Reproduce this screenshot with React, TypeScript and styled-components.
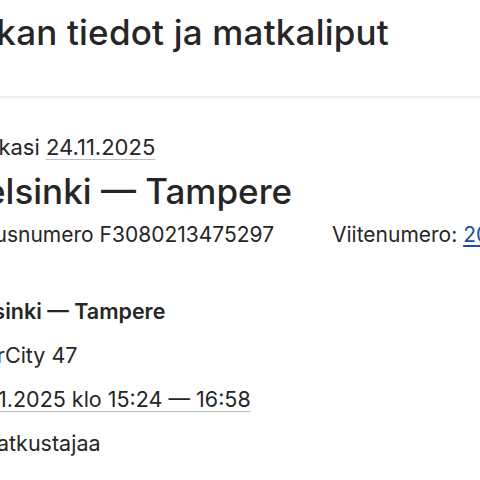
import styled, { createGlobalStyle } from 'styled-components'

const GlobalStyle = createGlobalStyle`
  html, body {
    margin: 0;
    padding: 0;
    background: #ffffff;
    overflow: hidden;
  }
  body {
    font-family: Inter, "Noto Sans", "Liberation Sans", sans-serif;
    color: #262626;
  }
`

const Viewport = styled.div`
  width: 480px;
  height: 480px;
  overflow: hidden;
`

const Page = styled.main`
  margin-left: -68px;
  width: 640px;
`

const Header = styled.header`
  padding: 11px 0 43px;
  border-bottom: 2px solid #eeeeee;
`

const Title = styled.h1`
  margin: 0;
  font-size: 35px;
  line-height: 42px;
  font-weight: 500;
  letter-spacing: 0.2px;
`

const Content = styled.div`
  padding: 35px 0 0 27px;
  display: flex;
  flex-direction: column;
`

const Summary = styled.section`
  display: flex;
  flex-direction: column;
`

const Lead = styled.p`
  margin: 0;
  font-size: 22px;
  line-height: 28px;
`

const Underlined = styled.span`
  text-decoration: underline;
  text-decoration-color: #bdbdbd;
  text-decoration-thickness: 1px;
  text-underline-offset: 4px;
`

const Route = styled.h2`
  margin: 10px 0 0;
  font-size: 35px;
  line-height: 40px;
  font-weight: 500;
`

const RefRow = styled.div`
  margin-top: 10px;
  display: flex;
  gap: 58px;
  font-size: 21px;
  line-height: 28px;
  white-space: nowrap;
`

const RefLink = styled.a`
  color: #1c4f9f;
  text-decoration: underline;
  text-underline-offset: 3px;
`

const Journey = styled.section`
  margin-top: 48px;
  display: flex;
  flex-direction: column;
  gap: 16px;
`

const Line = styled.p<{ $strong?: boolean }>`
  margin: 0;
  font-size: 21.5px;
  line-height: 28px;
  font-weight: ${(p) => (p.$strong ? 600 : 400)};
  white-space: nowrap;
`

export default function App() {
  return (
    <Viewport>
      <GlobalStyle />
      <Page>
        <Header>
          <Title>Matkan tiedot ja matkaliput</Title>
        </Header>
        <Content>
          <Summary>
            <Lead>
              Matkasi <Underlined>24.11.2025</Underlined>
            </Lead>
            <Route>Helsinki — Tampere</Route>
            <RefRow>
              <span>Tilausnumero F3080213475297</span>
              <span>
                Viitenumero: <RefLink href="#">2030802134752970</RefLink>
              </span>
            </RefRow>
          </Summary>
          <Journey>
            <Line $strong>Helsinki — Tampere</Line>
            <Line>InterCity 47</Line>
            <Line>
              <Underlined>24.11.2025 klo 15:24 — 16:58</Underlined>
            </Line>
            <Line>2 matkustajaa</Line>
          </Journey>
        </Content>
      </Page>
    </Viewport>
  )
}
